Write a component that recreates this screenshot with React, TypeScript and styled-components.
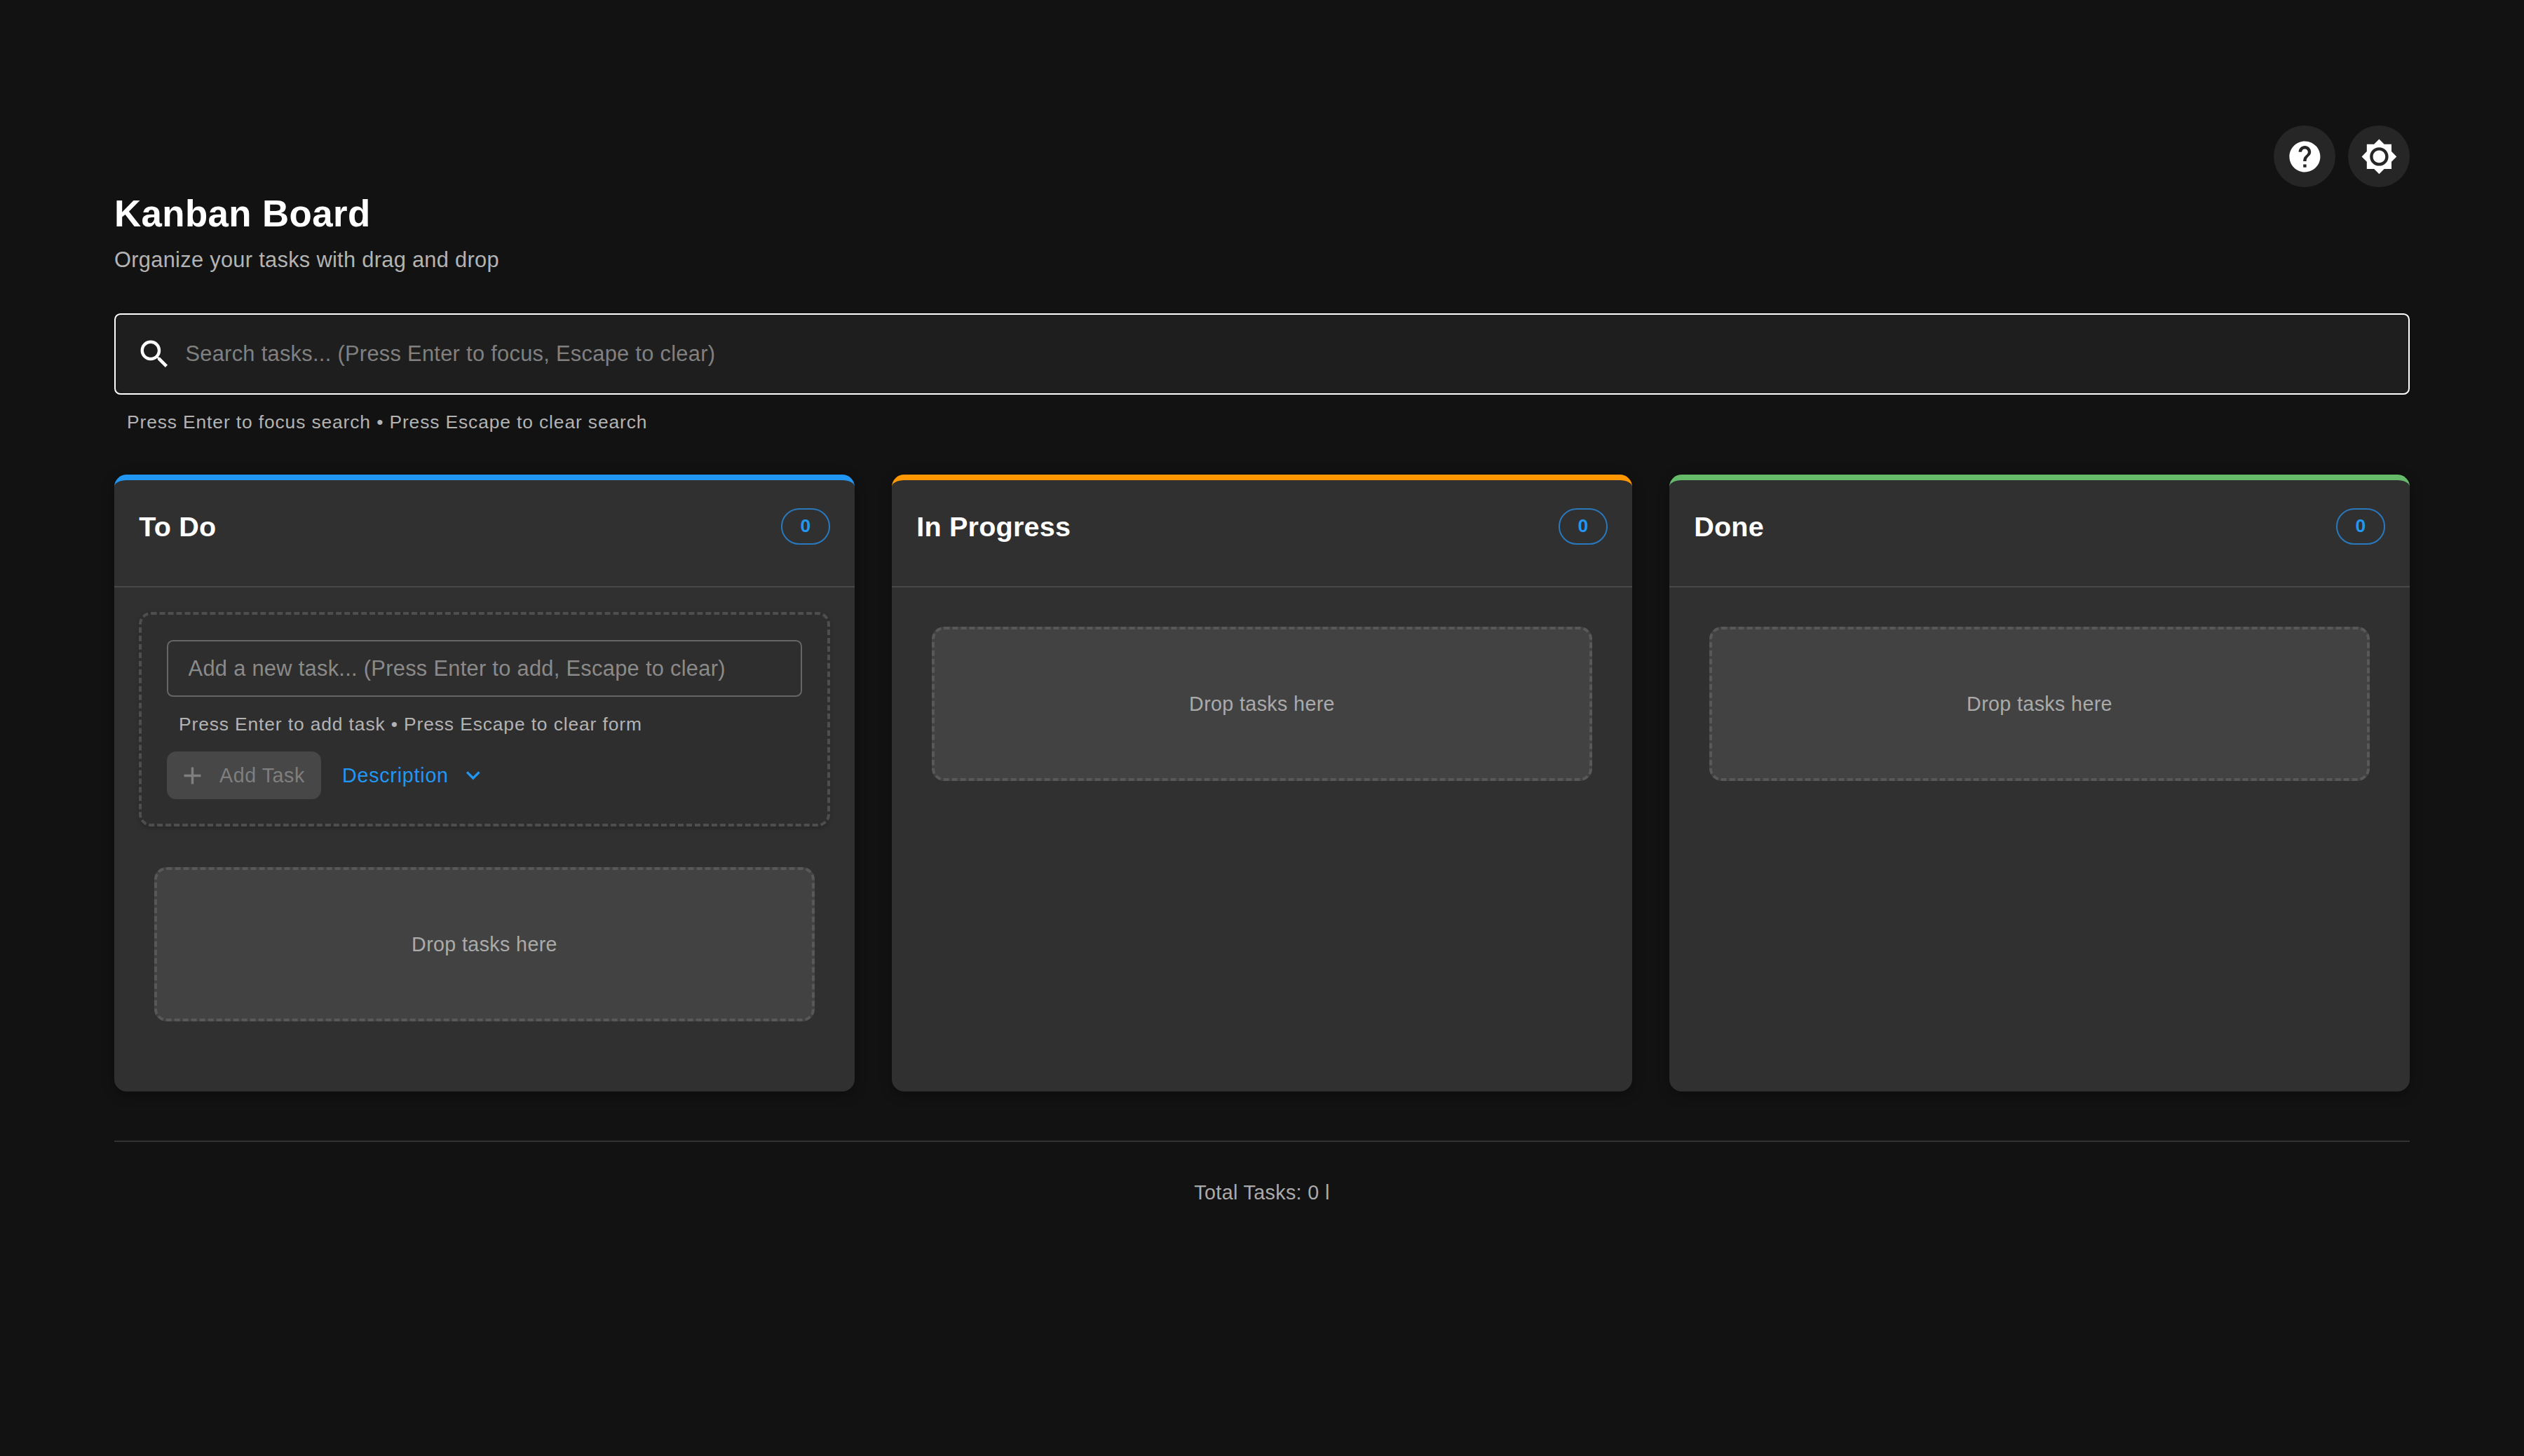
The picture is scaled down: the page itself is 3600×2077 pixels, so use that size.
import React from "react";
import styled, { createGlobalStyle } from "styled-components";
import { MdHelp, MdSearch, MdAdd, MdExpandMore } from "react-icons/md";

const Global = createGlobalStyle`
  html, body { margin: 0; padding: 0; background: #121212; }
  body { font-family: "Liberation Sans", Arial, sans-serif; color: #fff; }
  * { box-sizing: border-box; }
`;

const Page = styled.div`
  min-height: 2077px;
  padding: 179px 163px 0;
  background: #121212;
`;

const Actions = styled.div`
  display: flex;
  justify-content: flex-end;
  gap: 18px;
`;

const RoundButton = styled.button`
  width: 88px;
  height: 88px;
  border: 0;
  padding: 0;
  border-radius: 50%;
  background: #262626;
  color: #fff;
  display: flex;
  align-items: center;
  justify-content: center;
  font-size: 52.8px;
`;

const Title = styled.h1`
  margin: 3px 0 0;
  font-size: 52.8px;
  line-height: 70px;
  font-weight: 700;
  letter-spacing: 0.4px;
  color: #fff;
`;

const Subtitle = styled.p`
  margin: 9px 0 0;
  font-size: 30.8px;
  line-height: 44px;
  letter-spacing: 0.3px;
  color: #b3b3b3;
`;

const SearchBox = styled.label`
  margin-top: 54px;
  height: 116px;
  display: flex;
  align-items: center;
  gap: 18px;
  padding: 0 28.6px;
  background: #1e1e1e;
  border: 2.2px solid #fff;
  border-radius: 8.8px;
  color: #fff;
  font-size: 52.8px;
`;

const SearchInput = styled.input`
  flex: 1;
  border: 0;
  outline: 0;
  background: transparent;
  padding: 0;
  font: 400 30.8px "Liberation Sans", Arial, sans-serif;
  letter-spacing: 0.3px;
  color: #fff;
  &::placeholder { color: #808080; opacity: 1; }
`;

const Hint = styled.div<{ $inset: number }>`
  margin-left: ${(p) => p.$inset}px;
  font-size: 26.4px;
  line-height: 36px;
  letter-spacing: 0.88px;
  color: #b3b3b3;
`;

const SearchHint = styled(Hint)`
  margin-top: 21px;
`;

const Board = styled.div`
  margin-top: 57px;
  display: grid;
  grid-template-columns: repeat(3, 1056px);
  column-gap: 53px;
`;

const Column = styled.section<{ $accent: string }>`
  height: 880px;
  background: #303030;
  border-top: 8.8px solid ${(p) => p.$accent};
  border-radius: 17.6px;
  box-shadow: 0 4.4px 17.6px rgba(0, 0, 0, 0.3);
`;

const ColumnHeader = styled.header`
  height: 153.2px;
  padding: 39.6px 35.2px 0;
  display: flex;
  justify-content: space-between;
  align-items: flex-start;
  border-bottom: 2.2px solid #484848;
`;

const ColumnTitle = styled.h2`
  margin: 0;
  font-size: 39.6px;
  line-height: 52.8px;
  font-weight: 700;
  letter-spacing: 0.2px;
  color: #fff;
`;

const CountBadge = styled.span`
  width: 70px;
  height: 52.8px;
  border: 2.2px solid #2a78bc;
  border-radius: 26.4px;
  display: flex;
  align-items: center;
  justify-content: center;
  font-size: 26.4px;
  font-weight: 700;
  color: #2196f3;
`;

const ColumnBody = styled.div`
  padding: 35.2px;
`;

const AddForm = styled.form`
  height: 306px;
  padding: 35.8px;
  margin-bottom: 58px;
  border: 4.4px dashed #4e4e4e;
  border-radius: 17.6px;
  background: #2e2e2e;
  box-shadow: 0 2.2px 6.6px rgba(0, 0, 0, 0.18);
`;

const TaskInput = styled.input`
  display: block;
  width: 100%;
  height: 81px;
  padding: 0 28.6px;
  border: 2.2px solid #666;
  border-radius: 8.8px;
  outline: 0;
  background: transparent;
  font: 400 30.8px "Liberation Sans", Arial, sans-serif;
  letter-spacing: 0.3px;
  color: #fff;
  &::placeholder { color: #8a8a8a; opacity: 1; }
`;

const FormHint = styled(Hint)`
  margin-top: 21px;
`;

const FormActions = styled.div`
  margin-top: 21px;
  display: flex;
  align-items: center;
  gap: 30px;
`;

const AddButton = styled.button`
  width: 220px;
  height: 68px;
  padding: 0 0 0 16px;
  border: 0;
  border-radius: 13.2px;
  background: #474747;
  color: #7f7f7f;
  display: flex;
  align-items: center;
  gap: 18px;
  font: 400 28.6px "Liberation Sans", Arial, sans-serif;
  letter-spacing: 0.6px;
  svg { font-size: 41px; }
`;

const DescriptionToggle = styled.button`
  border: 0;
  padding: 0;
  background: transparent;
  color: #2196f3;
  display: flex;
  align-items: center;
  gap: 25px;
  font: 400 28.6px "Liberation Sans", Arial, sans-serif;
  letter-spacing: 0.8px;
  svg { font-size: 39.6px; margin: 0 -10px; }
`;

const DropZone = styled.div`
  height: 220px;
  margin: 21px 22px;
  border: 4.4px dashed #585858;
  border-radius: 17.6px;
  background: #424242;
  display: flex;
  align-items: center;
  justify-content: center;
  font-size: 28.6px;
  letter-spacing: 0.4px;
  color: #aaa;
`;

const Footer = styled.footer`
  margin-top: 70px;
  padding-top: 50px;
  border-top: 2.2px solid #333;
  text-align: center;
  font-size: 28.6px;
  line-height: 44px;
  letter-spacing: 0.4px;
  color: #aaa;
`;

const ThemeIcon = () => (
  <svg width="1em" height="1em" viewBox="0 0 24 24" fill="currentColor" aria-hidden="true">
    <path d="M20 8.69V4h-4.69L12 .69 8.69 4H4v4.69L.69 12 4 15.31V20h4.69L12 23.31 15.31 20H20v-4.69L23.31 12 20 8.69zM12 18c-3.31 0-6-2.69-6-6s2.69-6 6-6 6 2.69 6 6-2.69 6-6 6zm0-10c-2.21 0-4 1.79-4 4s1.79 4 4 4 4-1.79 4-4-1.79-4-4-4z" />
  </svg>
);

const columns = [
  { title: "To Do", accent: "#2196f3", form: true },
  { title: "In Progress", accent: "#ff9800", form: false },
  { title: "Done", accent: "#66bb6a", form: false },
];

export default function App() {
  return (
    <Page>
      <Global />
      <Actions>
        <RoundButton aria-label="Help"><MdHelp /></RoundButton>
        <RoundButton aria-label="Theme"><ThemeIcon /></RoundButton>
      </Actions>
      <Title>Kanban Board</Title>
      <Subtitle>Organize your tasks with drag and drop</Subtitle>
      <SearchBox>
        <MdSearch />
        <SearchInput placeholder="Search tasks... (Press Enter to focus, Escape to clear)" />
      </SearchBox>
      <SearchHint $inset={18}>Press Enter to focus search • Press Escape to clear search</SearchHint>
      <Board>
        {columns.map((c) => (
          <Column key={c.title} $accent={c.accent}>
            <ColumnHeader>
              <ColumnTitle>{c.title}</ColumnTitle>
              <CountBadge>0</CountBadge>
            </ColumnHeader>
            <ColumnBody>
              {c.form && (
                <AddForm onSubmit={(e) => e.preventDefault()}>
                  <TaskInput placeholder="Add a new task... (Press Enter to add, Escape to clear)" />
                  <FormHint $inset={17}>Press Enter to add task • Press Escape to clear form</FormHint>
                  <FormActions>
                    <AddButton type="button" disabled><MdAdd />Add Task</AddButton>
                    <DescriptionToggle type="button">Description<MdExpandMore /></DescriptionToggle>
                  </FormActions>
                </AddForm>
              )}
              <DropZone>Drop tasks here</DropZone>
            </ColumnBody>
          </Column>
        ))}
      </Board>
      <Footer>Total Tasks: 0 l</Footer>
    </Page>
  );
}
